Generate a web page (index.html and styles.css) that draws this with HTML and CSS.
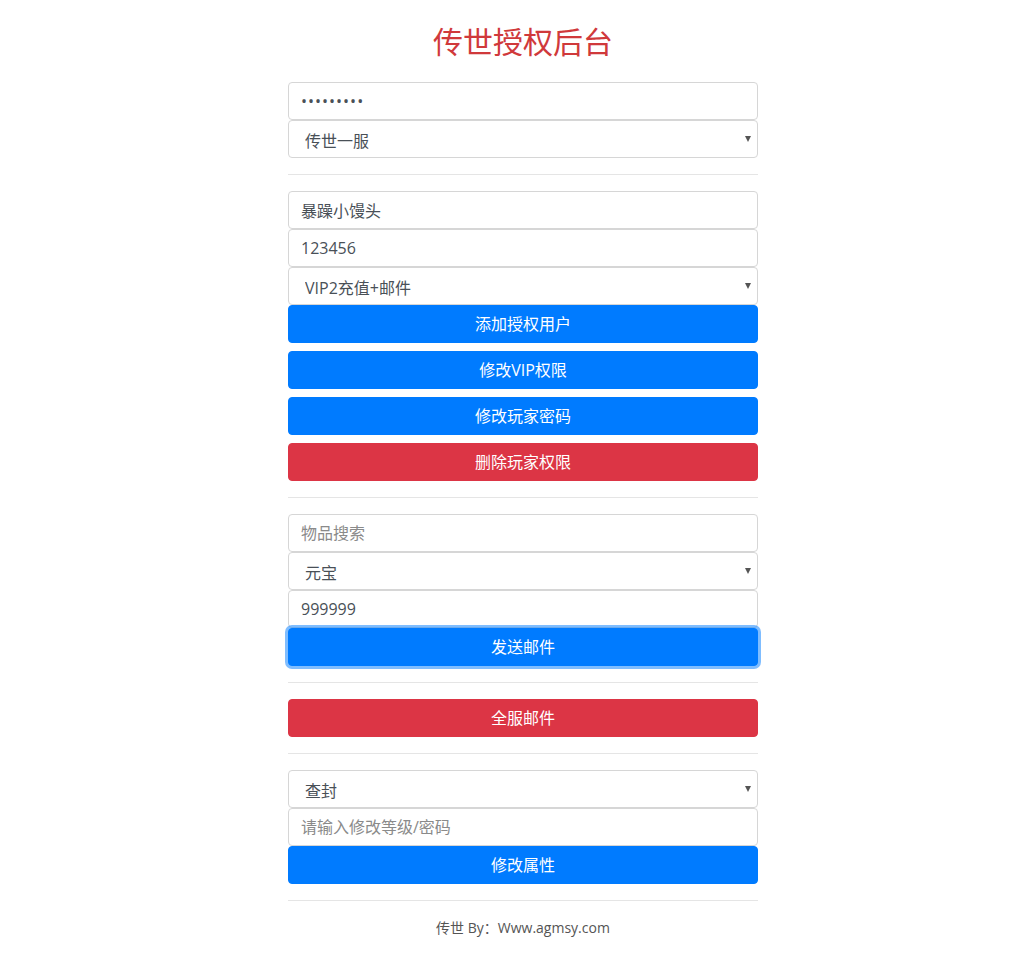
FILE: index.html
```html
<!DOCTYPE html>
<html lang="zh-CN">
<head>
    <meta charset="UTF-8">
    <meta name="viewport" content="width=device-width, initial-scale=1.0">
    <title>传世授权后台</title>
    <link rel="stylesheet" href="styles.css">
</head>
<body>
    <div class="container">
        <h1 class="title">传世授权后台</h1>

        <div class="group">
            <input class="field" type="password" value="123456789">
            <div class="select-wrap">
                <select class="field">
                    <option>传世一服</option>
                </select>
            </div>
        </div>
        <hr>

        <div class="group">
            <input class="field" type="text" value="暴躁小馒头">
            <input class="field" type="text" value="123456">
            <div class="select-wrap">
                <select class="field">
                    <option>VIP2充值+邮件</option>
                </select>
            </div>
            <button class="btn btn-primary" type="button">添加授权用户</button>
            <button class="btn btn-primary" type="button">修改VIP权限</button>
            <button class="btn btn-primary" type="button">修改玩家密码</button>
            <button class="btn btn-danger" type="button">删除玩家权限</button>
        </div>
        <hr>

        <div class="group">
            <input class="field" type="text" placeholder="物品搜索">
            <div class="select-wrap">
                <select class="field">
                    <option>元宝</option>
                </select>
            </div>
            <input class="field" type="text" value="999999">
            <button class="btn btn-primary is-focus" type="button">发送邮件</button>
        </div>
        <hr>

        <div class="group">
            <button class="btn btn-danger" type="button">全服邮件</button>
        </div>
        <hr>

        <div class="group">
            <div class="select-wrap">
                <select class="field">
                    <option>查封</option>
                </select>
            </div>
            <input class="field" type="text" placeholder="请输入修改等级/密码">
            <button class="btn btn-primary" type="button">修改属性</button>
        </div>
        <hr>

        <p class="footer">传世 By：Www.agmsy.com</p>
    </div>
</body>
</html>
```

FILE: styles.css
```css
body {
    margin: 0;
    padding-left: 10px;
    font-family: "Open Sans", "Noto Sans CJK SC", sans-serif;
    font-size: 16px;
    color: #495057;
    background: #fff;
}
.container {
    width: 470px;
    margin: 0 auto;
    padding-top: 24px;
}
.title {
    margin: 0 0 22px;
    font-size: 30px;
    font-weight: normal;
    line-height: 36px;
    text-align: center;
    color: #d0393b;
}
.group {
    display: flex;
    flex-direction: column;
}
.field {
    display: block;
    box-sizing: border-box;
    width: 100%;
    height: 38px;
    margin: 0;
    padding: 6px 12px;
    font-family: inherit;
    font-size: 16px;
    color: #495057;
    background: #fff;
    border: 1px solid #d6d6d6;
    border-radius: 4px;
    outline: none;
}
input[type="password"].field {
    letter-spacing: 1px;
}
.field::placeholder {
    color: #8a8a8a;
}
.select-wrap {
    position: relative;
}
.select-wrap select {
    -webkit-appearance: none;
    appearance: none;
    padding: 8px 16px 4px;
}
.select-wrap::after {
    content: "";
    position: absolute;
    right: 7px;
    top: 16px;
    border-left: 3.5px solid transparent;
    border-right: 3.5px solid transparent;
    border-top: 6px solid #555;
    pointer-events: none;
}
.btn {
    display: block;
    box-sizing: border-box;
    width: 100%;
    height: 38px;
    padding: 0 12px 2px;
    font-family: inherit;
    font-size: 16px;
    color: #fff;
    border: 1px solid transparent;
    border-radius: 4px;
    cursor: pointer;
}
.btn + .btn {
    margin-top: 8px;
}
.btn-primary {
    background-color: #007bff;
    border-color: #007bff;
}
.btn-danger {
    background-color: #dc3545;
    border-color: #dc3545;
}
.is-focus {
    box-shadow: 0 0 0 3px rgba(0, 123, 255, 0.5);
}
hr {
    margin: 16px 0;
    border: 0;
    border-top: 1px solid #e5e5e5;
}
.footer {
    margin: 16px 0 20px;
    font-size: 14px;
    line-height: 21px;
    text-align: center;
    color: #555;
}
```
